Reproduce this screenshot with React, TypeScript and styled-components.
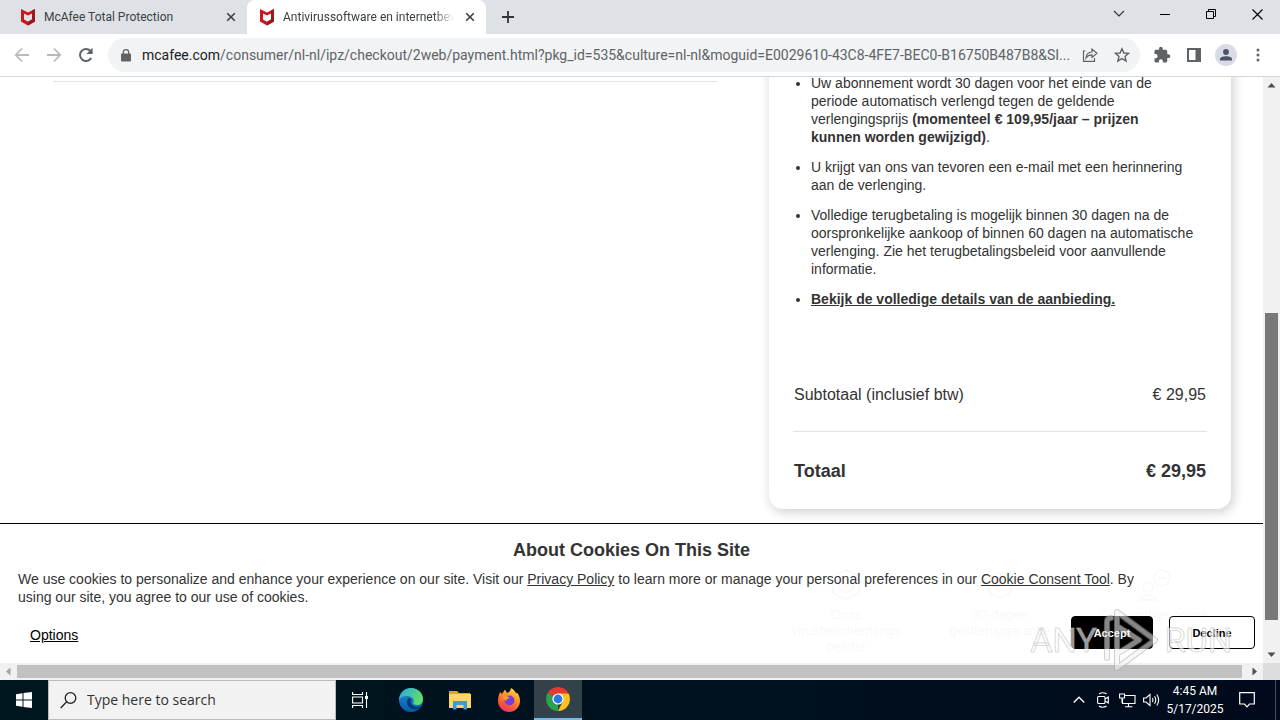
import React from "react";
import styled, { createGlobalStyle } from "styled-components";

const Global = createGlobalStyle`
  *, *::before, *::after { box-sizing: border-box; }
  body { margin: 0; background: #fff; }
  button, input { font: inherit; }
`;

const ui = `"Open Sans", "Noto Sans", sans-serif`;
const compactUi = `Roboto, "Open Sans", sans-serif`;
const arial = `"Liberation Sans", Arial, sans-serif`;

const Screen = styled.div`
  display: flex;
  flex-direction: column;
  height: 100vh;
  overflow: hidden;
  font-family: ${ui};
`;

/* Browser chrome */

const TabStrip = styled.header`
  display: flex;
  align-items: flex-end;
  height: 34px;
  padding-left: 8px;
  background: #dee1e6;
`;

const Tab = styled.div<{ $active?: boolean }>`
  display: flex;
  align-items: center;
  gap: 8px;
  width: 239px;
  height: 34px;
  padding: 0 8px 0 12px;
  border-radius: 8px 8px 0 0;
  background: ${(p) => (p.$active ? "#fff" : "transparent")};
`;

const TabTitle = styled.span<{ $fade?: boolean }>`
  flex: 1;
  overflow: hidden;
  white-space: nowrap;
  font-family: ${compactUi};
  font-size: 12px;
  line-height: 16px;
  color: #3c4043;
  mask-image: ${(p) => (p.$fade ? "linear-gradient(to right, #000 88%, transparent)" : "none")};
`;

const IconButton = styled.button<{ $w?: number; $h?: number; $color?: string }>`
  display: inline-flex;
  flex: none;
  align-items: center;
  justify-content: center;
  width: ${(p) => p.$w ?? 16}px;
  height: ${(p) => p.$h ?? 16}px;
  padding: 0;
  border: 0;
  background: none;
  color: ${(p) => p.$color ?? "#5f6368"};
`;

const WindowControls = styled.div`
  display: flex;
  align-items: center;
  margin-left: auto;
  height: 28px;
  align-self: flex-start;
`;

const Toolbar = styled.nav`
  display: flex;
  align-items: center;
  height: 43px;
  padding: 0 6px;
  border-bottom: 1px solid #d5d7d9;
  background: #fff;
`;

const Omnibox = styled.div`
  display: flex;
  flex: 1;
  align-items: center;
  min-width: 0;
  height: 34px;
  margin: 0 6px;
  padding: 0 2px 0 10px;
  border-radius: 17px;
  background: #f1f3f4;
`;

const Url = styled.div`
  flex: 1;
  min-width: 0;
  margin-left: 8px;
  overflow: hidden;
  text-overflow: ellipsis;
  white-space: nowrap;
  font-family: ${compactUi};
  font-size: 14px;
  line-height: 20px;
  color: #5f6368;
  b { font-weight: 400; color: #202124; }
`;

const Avatar = styled.span`
  display: flex;
  align-items: center;
  justify-content: center;
  width: 22px;
  height: 22px;
  border-radius: 50%;
  background: #d9dce6;
`;

/* Page */

const Viewport = styled.div`
  position: relative;
  display: grid;
  flex: 1;
  min-height: 0;
  grid-template-columns: minmax(0, 1fr) 17px;
  grid-template-rows: minmax(0, 1fr) 17px;
`;

const Page = styled.main`
  position: relative;
  overflow: hidden;
  font-family: ${arial};
  color: #333;
`;

const Columns = styled.div`
  display: grid;
  grid-template-columns: minmax(0, 1fr) 462px;
  gap: 52px;
  padding: 0 32px 0 53px;
`;

const Rule = styled.hr<{ $gap: number }>`
  width: 100%;
  height: 1px;
  margin: ${(p) => p.$gap}px 0 0;
  border: 0;
  background: #e3e3e3;
`;

const Card = styled.section`
  margin-top: -24px;
  padding: 21px 24px 26px;
  border-radius: 14px;
  background: #fff;
  box-shadow: 2px 3px 12px rgba(0, 0, 0, 0.2);
`;

const Terms = styled.ul`
  display: flex;
  flex-direction: column;
  gap: 12px;
  margin: 0 0 75px;
  padding: 0 10px 0 18px;
  font-size: 14px;
  line-height: 18px;
  a { color: inherit; font-weight: 700; }
`;

const PriceRow = styled.div<{ $total?: boolean }>`
  display: flex;
  justify-content: space-between;
  padding: 0 1px;
  margin-top: ${(p) => (p.$total ? 27 : 0)}px;
  font-size: ${(p) => (p.$total ? 18 : 16)}px;
  font-weight: ${(p) => (p.$total ? 700 : 400)};
  line-height: 24px;
`;

const Benefits = styled.div`
  display: grid;
  grid-template-columns: repeat(3, 1fr);
  margin: 58px 0 0;
`;

const Benefit = styled.div`
  display: flex;
  flex-direction: column;
  align-items: center;
  gap: 4px;
  font-size: 13px;
  line-height: 16px;
  text-align: center;
  white-space: pre-line;
`;

const CookieBanner = styled.aside`
  position: absolute;
  right: 0;
  bottom: 0;
  left: 0;
  height: 140px;
  padding: 14px 8px 0 18px;
  border-top: 1px solid #000;
  background: rgba(255, 255, 255, 0.96);
`;

const CookieTitle = styled.h2`
  margin: 0 10px 8px 0;
  font-size: 18px;
  line-height: 24px;
  text-align: center;
`;

const CookieText = styled.p`
  margin: 0;
  padding-right: 100px;
  font-size: 14px;
  line-height: 18px;
  a { color: inherit; }
`;

const CookieActions = styled.div`
  display: flex;
  align-items: center;
  gap: 16px;
  margin-top: 10px;
`;

const OptionsLink = styled.a`
  margin: 0 auto 0 12px;
  padding-top: 4px;
  font-size: 14px;
  line-height: 18px;
  color: #000;
`;

const CookieButton = styled.button<{ $solid?: boolean }>`
  width: ${(p) => (p.$solid ? 82 : 86)}px;
  height: 33px;
  padding: 0;
  border: 1px solid #000;
  border-radius: 4px;
  background: ${(p) => (p.$solid ? "#000" : "#fff")};
  color: ${(p) => (p.$solid ? "#fff" : "#000")};
  font-size: 11px;
  font-weight: 700;
`;

const Watermark = styled.div`
  position: absolute;
  right: 48px;
  bottom: 8px;
  display: flex;
  align-items: center;
  gap: 6px;
  pointer-events: none;
  font-family: ${compactUi};
  font-size: 34px;
  line-height: 40px;
  color: rgba(255, 255, 255, 0.6);
  -webkit-text-stroke: 1px rgba(185, 185, 185, 0.55);
  svg { opacity: 0.55; }
`;

/* Scrollbars */

const Bar = styled.div<{ $vertical?: boolean }>`
  display: flex;
  flex-direction: ${(p) => (p.$vertical ? "column" : "row")};
  align-items: stretch;
  background: #f1f1f1;
`;

const Track = styled.div<{ $vertical?: boolean }>`
  display: flex;
  flex: 1;
  flex-direction: ${(p) => (p.$vertical ? "column" : "row")};
  padding: ${(p) => (p.$vertical ? "0 2px" : "2px 0")};
`;

const Thumb = styled.div<{ $share: number; $dark?: boolean }>`
  flex: ${(p) => p.$share} 0 0;
  background: ${(p) => (p.$dark ? "#787878" : "#c1c1c1")};
`;

const Space = styled.div<{ $share: number }>`
  flex: ${(p) => p.$share} 0 0;
`;

const Corner = styled.div`
  background: #dcdcdc;
`;

/* Taskbar */

const Taskbar = styled.footer`
  display: flex;
  align-items: stretch;
  height: 40px;
  background: linear-gradient(to right, #00171f, #00101d 60%, #000a1c);
  color: #fff;
`;

const SearchBox = styled.label`
  display: flex;
  align-items: center;
  gap: 10px;
  width: 288px;
  padding: 0 11px;
  border: 1px solid #b9bcbd;
  background: #f2f2f2;
  input {
    flex: 1;
    min-width: 0;
    padding: 0;
    border: 0;
    outline: 0;
    background: none;
    font-size: 14px;
    line-height: 20px;
  }
  input::placeholder { color: #333; opacity: 1; }
`;

const AppButton = styled.button<{ $active?: boolean }>`
  display: flex;
  align-items: center;
  justify-content: center;
  width: 48px;
  padding: 0;
  border: 0;
  border-bottom: ${(p) => (p.$active ? "2px solid #76b9ed" : "0")};
  background: ${(p) => (p.$active ? "#33424a" : "none")};
  color: #fff;
`;

const Apps = styled.div`
  display: flex;
  gap: 1px;
  margin-left: 3px;
`;

const Tray = styled.div`
  display: flex;
  align-items: center;
  margin-left: auto;
`;

const Clock = styled.time`
  display: flex;
  flex-direction: column;
  width: 64px;
  text-align: center;
  font-family: ${compactUi};
  font-size: 12px;
  line-height: 18px;
`;

const Edge = styled.span`
  align-self: stretch;
  width: 1px;
  margin: 0 4px 0 8px;
  background: #45505c;
`;

/* Icons */

const Shield = () => (
  <svg width="16" height="18" viewBox="0 0 16 18">
    <path d="M1 1 L8 4.5 L15 1 V13.5 L8 17.5 L1 13.5 Z M4 5.4 V11.6 L8 13.8 L12 11.6 V5.4 L8 7.6 Z" fill="#c8181e" fillRule="evenodd" />
    <path d="M15 1 V13.5 L8 17.5 V13.8 L12 11.6 V5.4 L12 2.5 Z" fill="#9a1722" />
  </svg>
);

const Cross = () => (
  <svg width="10" height="10" viewBox="0 0 10 10" stroke="currentColor" strokeWidth="1.6">
    <path d="M1.2 1.2 L8.8 8.8 M8.8 1.2 L1.2 8.8" />
  </svg>
);

const Arrow = ({ d }: { d: string }) => (
  <svg width="16" height="16" viewBox="0 0 16 16" fill="none" stroke="currentColor" strokeWidth="1.8">
    <path d={d} />
  </svg>
);

const Tri = ({ d, c = "#505050" }: { d: string; c?: string }) => (
  <svg width="9" height="9" viewBox="0 0 9 9" fill={c}>
    <path d={d} />
  </svg>
);

export default function App() {
  return (
    <Screen>
      <Global />
      <TabStrip>
        <Tab>
          <Shield />
          <TabTitle>McAfee Total Protection</TabTitle>
          <IconButton aria-label="Close tab" $color="#3c4043"><Cross /></IconButton>
        </Tab>
        <Tab $active>
          <Shield />
          <TabTitle $fade>Antivirussoftware en internetbeveiliging</TabTitle>
          <IconButton aria-label="Close tab" $color="#3c4043"><Cross /></IconButton>
        </Tab>
        <IconButton aria-label="New tab" $w={44} $h={34} $color="#303338">
          <svg width="12" height="12" viewBox="0 0 12 12" stroke="currentColor" strokeWidth="1.8"><path d="M6 0 V12 M0 6 H12" /></svg>
        </IconButton>
        <WindowControls>
          <IconButton aria-label="Search tabs" $w={46} $h={28} $color="#333">
            <svg width="12" height="8" viewBox="0 0 12 8" fill="none" stroke="currentColor" strokeWidth="1.2"><path d="M1 1 L6 6 L11 1" /></svg>
          </IconButton>
          <IconButton aria-label="Minimize" $w={46} $h={28} $color="#000">
            <svg width="10" height="10" viewBox="0 0 10 10" stroke="currentColor"><path d="M0 5.5 H10" /></svg>
          </IconButton>
          <IconButton aria-label="Restore" $w={46} $h={28} $color="#000">
            <svg width="11" height="11" viewBox="0 0 11 11" fill="none" stroke="currentColor"><path d="M.5 2.5 H7.5 V9.5 H.5 Z M2.5 2.5 V.5 H9.5 V7.5 H7.5" /></svg>
          </IconButton>
          <IconButton aria-label="Close" $w={46} $h={28} $color="#000">
            <svg width="11" height="11" viewBox="0 0 11 11" stroke="currentColor" strokeWidth="1.1"><path d="M.5 .5 L10.5 10.5 M10.5 .5 L.5 10.5" /></svg>
          </IconButton>
        </WindowControls>
      </TabStrip>

      <Toolbar>
        <IconButton aria-label="Back" $w={32} $h={32} $color="#b8babd"><Arrow d="M15 8 H2 M8 1.5 L1.8 8 L8 14.5" /></IconButton>
        <IconButton aria-label="Forward" $w={32} $h={32} $color="#b8babd"><Arrow d="M1 8 H14 M8 1.5 L14.2 8 L8 14.5" /></IconButton>
        <IconButton aria-label="Reload" $w={32} $h={32}>
          <svg width="16" height="16" viewBox="0 0 16 16"><path d="M13.2 11 A6 6 0 1 1 12.3 3.8" fill="none" stroke="currentColor" strokeWidth="2" /><path d="M14.6 .8 V7 H8.4 Z" fill="currentColor" /></svg>
        </IconButton>
        <Omnibox>
          <IconButton aria-label="Site information">
            <svg width="10" height="13" viewBox="0 0 10 13"><rect x="0" y="4.5" width="10" height="8" rx="1" fill="currentColor" /><path d="M2.3 5 V3.4 a2.7 2.7 0 0 1 5.4 0 V5" fill="none" stroke="currentColor" strokeWidth="1.3" /></svg>
          </IconButton>
          <Url><b>mcafee.com</b>/consumer/nl-nl/ipz/checkout/2web/payment.html?pkg_id=535&amp;culture=nl-nl&amp;moguid=E0029610-43C8-4FE7-BEC0-B16750B487B8&amp;SI...</Url>
          <IconButton aria-label="Share" $w={32} $h={32}>
            <svg width="16" height="16" viewBox="0 0 16 16" fill="none" stroke="currentColor" strokeWidth="1.2"><path d="M3.5 4 H1.5 V14.3 H12.5 V11" /><path d="M4 11 C4.3 7 6.5 5.2 10 5 V2 L15 6.2 L10 10.4 V7.8 C7.5 7.8 5.6 8.6 4 11 Z" /></svg>
          </IconButton>
          <IconButton aria-label="Bookmark" $w={32} $h={32}>
            <svg width="16" height="16" viewBox="0 0 16 16" fill="none" stroke="currentColor" strokeWidth="1.4"><path d="M8 1.7 L9.9 6 L14.6 6.4 L11 9.5 L12.1 14.1 L8 11.6 L3.9 14.1 L5 9.5 L1.4 6.4 L6.1 6 Z" /></svg>
          </IconButton>
        </Omnibox>
        <IconButton aria-label="Extensions" $w={32} $h={32}>
          <svg width="18" height="18" viewBox="0 0 24 24" fill="currentColor"><path d="M20.5 11H19V7c0-1.1-.9-2-2-2h-4V3.5a2.5 2.5 0 0 0-5 0V5H4c-1.1 0-2 .9-2 2v3.8h1.500a2.7 2.7 0 0 1 0 5.400H2V20c0 1.100.9 2 2 2h3.800v-1.500a2.700 2.700 0 0 1 5.400 0V22H17c1.100 0 2-.9 2-2v-4h1.500a2.500 2.500 0 0 0 0-5z" /></svg>
        </IconButton>
        <IconButton aria-label="Side panel" $w={32} $h={32}>
          <svg width="14" height="14" viewBox="0 0 14 14"><path d="M0 0 H14 V14 H0 Z M2 2 V12 H8.5 V2 Z" fill="currentColor" fillRule="evenodd" /></svg>
        </IconButton>
        <IconButton aria-label="Profile" $w={32} $h={32}>
          <Avatar><svg width="12" height="12" viewBox="0 0 12 12" fill="#4c5568"><circle cx="6" cy="3" r="2.9" /><path d="M0 11.5 V10 C0 8 3.5 7.2 6 7.2 S12 8 12 10 V11.5 Z" /></svg></Avatar>
        </IconButton>
        <IconButton aria-label="Menu" $w={32} $h={32}>
          <svg width="4" height="14" viewBox="0 0 4 14" fill="currentColor"><circle cx="2" cy="2" r="1.5" /><circle cx="2" cy="7" r="1.5" /><circle cx="2" cy="12" r="1.5" /></svg>
        </IconButton>
      </Toolbar>

      <Viewport>
        <Page>
          <Columns>
            <div><Rule $gap={4} /></div>
            <div>
              <Card>
                <Terms>
                  <li>Uw abonnement wordt 30 dagen voor het einde van de periode automatisch verlengd tegen de geldende verlengingsprijs <b>(momenteel € 109,95/jaar – prijzen<br />kunnen worden gewijzigd)</b>.</li>
                  <li>U krijgt van ons van tevoren een e-mail met een herinnering aan de verlenging.</li>
                  <li>Volledige terugbetaling is mogelijk binnen 30 dagen na de oorspronkelijke aankoop of binnen 60 dagen na automatische verlenging. Zie het terugbetalingsbeleid voor aanvullende informatie.</li>
                  <li><a href="#details">Bekijk de volledige details van de aanbieding.</a></li>
                </Terms>
                <PriceRow><span>Subtotaal (inclusief btw)</span><span>€ 29,95</span></PriceRow>
                <Rule $gap={24} />
                <PriceRow $total><span>Totaal</span><span>€ 29,95</span></PriceRow>
              </Card>
              <Benefits>
                <Benefit>
                  <svg width="36" height="36" viewBox="0 0 36 36" fill="none" stroke="#c01818" strokeWidth="1.5"><path d="M18 3 L31 9 V26 L18 33 L5 26 V9 Z M11 15 L18 19 L25 15 V22 L18 26 L11 22 Z" /></svg>
                  {"Onze\nvirusbeschermings\nbelofte"}
                </Benefit>
                <Benefit>
                  <svg width="36" height="36" viewBox="0 0 36 36" fill="none" stroke="#c01818" strokeWidth="1.5"><circle cx="18" cy="18" r="12" /><path d="M22 13 a6 6 0 1 0 0 10 M10 17 H19 M10 20 H19" /></svg>
                  {"30-dagen\ngeldteruggarantie"}
                </Benefit>
                <Benefit>
                  <svg width="36" height="36" viewBox="0 0 36 36" fill="none" stroke="#c01818" strokeWidth="1.5"><circle cx="26" cy="11" r="8" /><circle cx="12" cy="20" r="5" /><path d="M4 33 C4 26 20 26 20 33 Z M22 11 H30" /></svg>
                  Deskundige online
                </Benefit>
              </Benefits>
            </div>
          </Columns>
          <CookieBanner>
            <CookieTitle>About Cookies On This Site</CookieTitle>
            <CookieText>
              We use cookies to personalize and enhance your experience on our site. Visit our <a href="#privacy">Privacy Policy</a> to learn more or manage your personal preferences in our <a href="#consent">Cookie Consent Tool</a>. By using our site, you agree to our use of cookies.
            </CookieText>
            <CookieActions>
              <OptionsLink href="#options">Options</OptionsLink>
              <CookieButton $solid>Accept</CookieButton>
              <CookieButton>Decline</CookieButton>
            </CookieActions>
          </CookieBanner>
        </Page>
        <Bar $vertical>
          <IconButton aria-label="Scroll up" $w={17} $h={17}><Tri d="M4.5 2 L8.5 6.5 H.5 Z" /></IconButton>
          <Track $vertical><Space $share={219} /><Thumb $share={307} $dark /><Space $share={26} /></Track>
          <IconButton aria-label="Scroll down" $w={17} $h={17}><Tri d="M.5 2.5 H8.5 L4.5 7 Z" /></IconButton>
        </Bar>
        <Bar>
          <IconButton aria-label="Scroll left" $w={17} $h={17}><Tri c="#a3a3a3" d="M6.5 .5 V8.5 L2 4.5 Z" /></IconButton>
          <Track><Thumb $share={1225} /><Space $share={4} /></Track>
          <IconButton aria-label="Scroll right" $w={17} $h={17}><Tri d="M2.5 .5 V8.5 L7 4.5 Z" /></IconButton>
        </Bar>
        <Corner />
        <Watermark>
          <span>ANY</span>
          <svg width="56" height="64" viewBox="0 0 56 64" fill="none" strokeLinejoin="round" strokeLinecap="round">
            <path id="play" d="M4 50 V14 Q4 10 8 10 M14 4 L52 32 L14 60 V4 M14 18 L36 32 L14 46" stroke="#aaa" strokeWidth="6" />
            <path d="M4 50 V14 Q4 10 8 10 M14 4 L52 32 L14 60 V4 M14 18 L36 32 L14 46" stroke="#f4f4f4" strokeWidth="4" />
          </svg>
          <span>RUN</span>
        </Watermark>
      </Viewport>

      <Taskbar>
        <AppButton aria-label="Start">
          <svg width="16" height="16" viewBox="0 0 16 16" fill="#fff"><path d="M0 2.2 L6.5 1.3 V7.5 H0 Z M7.5 1.1 L16 0 V7.5 H7.5 Z M0 8.5 H6.5 V14.7 L0 13.8 Z M7.5 8.5 H16 V16 L7.5 14.9 Z" /></svg>
        </AppButton>
        <SearchBox>
          <svg width="17" height="17" viewBox="0 0 17 17" fill="none" stroke="#222" strokeWidth="1.3"><circle cx="10.5" cy="6" r="5.3" /><path d="M6.7 9.8 L.7 16" /></svg>
          <input aria-label="Search" placeholder="Type here to search" />
        </SearchBox>
        <AppButton aria-label="Task view">
          <svg width="17" height="16" viewBox="0 0 17 16" fill="none" stroke="#fff" strokeWidth="1.1"><path d="M.6 0 V2.5 H10.5 V0 M.6 16 V13.5 H10.5 V16 M.6 5 H10.5 V11 H.6 Z M14.5 0 V16" /><rect x="13" y="4" width="3" height="3" fill="#fff" stroke="none" /></svg>
        </AppButton>
        <Apps>
          <AppButton aria-label="Edge">
            <svg width="24" height="24" viewBox="0 0 24 24">
              <defs>
                <linearGradient id="eg" x1="0" y1="0" x2="1" y2=".4"><stop offset="0" stopColor="#2aa9e0" /><stop offset="1" stopColor="#5fdc6a" /></linearGradient>
                <linearGradient id="eb" x1="0" y1="0" x2="0" y2="1"><stop offset="0" stopColor="#1f8fdc" /><stop offset="1" stopColor="#0c57a8" /></linearGradient>
              </defs>
              <circle cx="12" cy="12" r="12" fill="url(#eb)" />
              <path d="M.3 10 C1.5 4 6.5 0 12 0 C19 0 24 5 24 11 C24 15 21 17 18 17 C15 17 13.5 15.8 14.3 14.5 C15.5 12.5 14 9 10 8.3 C5.5 7.5 1.5 9 .3 12 Z" fill="url(#eg)" />
              <path d="M9 10.5 C6.5 14 9 21.5 16 21.5 C19 21.5 21 20 22.5 18 C19 20 12.5 19 11.8 14.5 C11.6 12.8 12.5 11 10.8 10 Z" fill="#083a72" />
            </svg>
          </AppButton>
          <AppButton aria-label="File Explorer">
            <svg width="22" height="20" viewBox="0 0 22 20"><path d="M0 1 H8 L10 3 H21 V8 H0 Z" fill="#e8a317" /><path d="M0 4 H22 V18 H0 Z" fill="#fbd76b" /><path d="M4 19.5 V11 H18 V19.5 H14.5 V15 H7.5 V19.5 Z" fill="#3f9ad8" /></svg>
          </AppButton>
          <AppButton aria-label="Firefox">
            <svg width="24" height="24" viewBox="0 0 24 24">
              <defs><linearGradient id="ff" x1=".8" y1="0" x2=".3" y2="1"><stop offset="0" stopColor="#ffe14a" /><stop offset=".45" stopColor="#ff8b20" /><stop offset="1" stopColor="#f0295e" /></linearGradient></defs>
              <path d="M3 4 L5 6 L8 1.5 L10 5 C12 4.5 13.5 3 14 0 C17 1.5 18.5 4 19 5.5 L20 4.5 C22 7 23 10 23 13 A11 11 0 0 1 1 13 C1 9 2 6.5 3 4 Z" fill="url(#ff)" />
              <circle cx="12.5" cy="12.5" r="5" fill="#7b3fd0" />
              <path d="M6 8 C9 7 11 8.5 12.5 9.5 C11.5 11 9.5 10.5 9 13 C7 12 6 10 6 8 Z" fill="#ff9a2a" />
            </svg>
          </AppButton>
          <AppButton aria-label="Chrome" $active>
            <svg width="24" height="24" viewBox="0 0 24 24">
              <path d="M12 12 L1.61 6 A12 12 0 0 1 22.39 6 Z" fill="#e33b2e" />
              <path d="M12 12 L12 24 A12 12 0 0 1 1.61 6 Z" fill="#2ba24c" />
              <path d="M12 6.5 H22.6 A12 12 0 0 1 12 24 L16.7 14.8 Z" fill="#fcc31e" />
              <circle cx="12" cy="12" r="5.6" fill="#fff" /><circle cx="12" cy="12" r="4.4" fill="#2f76e8" />
            </svg>
          </AppButton>
        </Apps>
        <Tray>
          <IconButton aria-label="Show hidden icons" $w={24} $h={40} $color="#fff">
            <svg width="12" height="8" viewBox="0 0 12 8" fill="none" stroke="currentColor" strokeWidth="1.3"><path d="M.7 6.5 L6 1.2 L11.3 6.5" /></svg>
          </IconButton>
          <IconButton aria-label="Meet now" $w={24} $h={40} $color="#fff">
            <svg width="12" height="16" viewBox="0 0 12 16" fill="none" stroke="currentColor" strokeWidth="1.1"><rect x=".6" y="4.5" width="7.4" height="7" rx="1" /><path d="M8 7 L11.3 5 V11 L8 9 M2 2 C4 .3 7.5 .3 9.5 2 M2 14 C4 15.7 7.5 15.7 9.5 14" /></svg>
          </IconButton>
          <IconButton aria-label="Network" $w={24} $h={40} $color="#fff">
            <svg width="17" height="15" viewBox="0 0 17 15" fill="none" stroke="currentColor" strokeWidth="1.1"><path d="M5.5 2.5 H16 V10.5 H3.5 V6 M9.5 10.5 V13.5 M6 13.7 H13.5 M.6 1 H5.5 V5 H.6 Z M3 5 V10" /></svg>
          </IconButton>
          <IconButton aria-label="Volume" $w={24} $h={40} $color="#fff">
            <svg width="17" height="14" viewBox="0 0 17 14" fill="none" stroke="currentColor" strokeWidth="1.1"><path d="M.6 5 H3 L7 1.5 V12.5 L3 9 H.6 Z M9.3 5 Q10.6 7 9.3 9 M11.5 3.3 Q14 7 11.5 10.7 M13.8 1.5 Q17.5 7 13.8 12.5" /></svg>
          </IconButton>
          <Clock><span>4:45 AM</span><span>5/17/2025</span></Clock>
          <IconButton aria-label="Notifications" $w={40} $h={40} $color="#fff">
            <svg width="16" height="16" viewBox="0 0 16 16" fill="none" stroke="currentColor" strokeWidth="1.2"><path d="M.7 .7 H15.3 V12 H10.5 L8 14.8 L5.5 12 H.7 Z" /></svg>
          </IconButton>
          <Edge />
        </Tray>
      </Taskbar>
    </Screen>
  );
}
